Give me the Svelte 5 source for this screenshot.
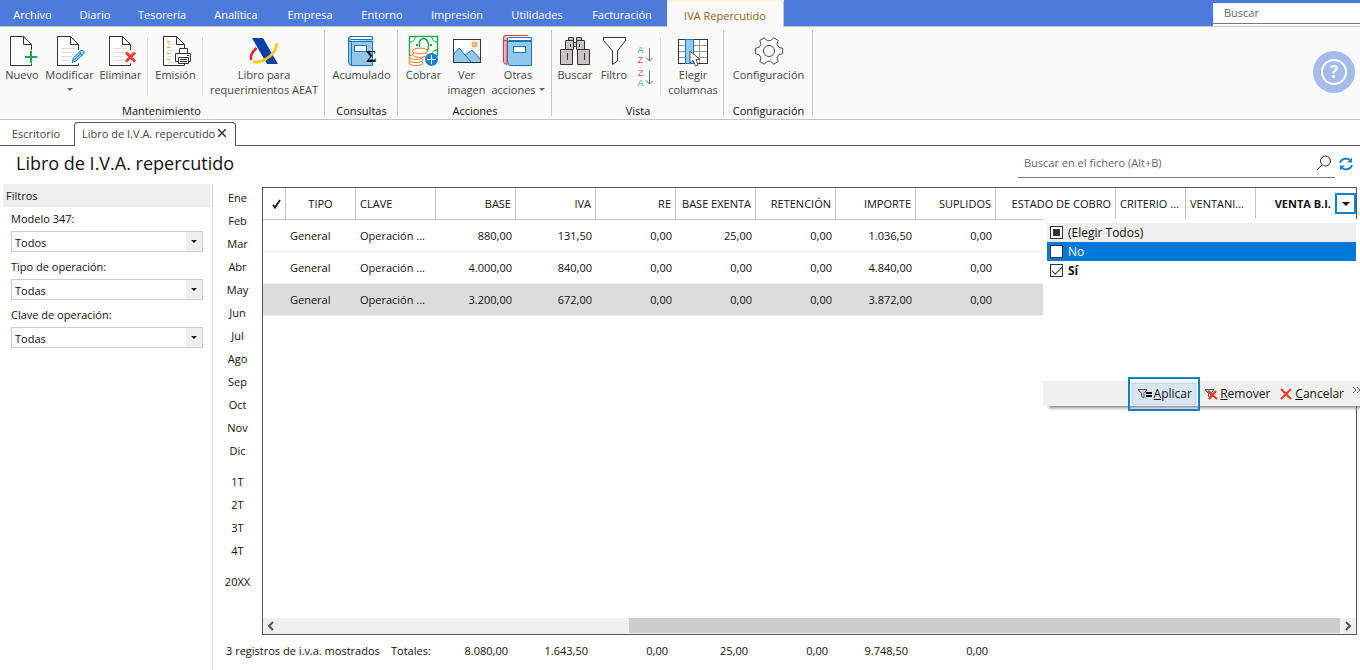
<script>
	const menu = [
		{ name: 'Archivo', size: 'w65' },
		{ name: 'Diario', size: 'w60' },
		{ name: 'Tesorería', size: 'w74' },
		{ name: 'Analítica', size: 'w74' },
		{ name: 'Empresa', size: 'w74' },
		{ name: 'Entorno', size: 'w70' },
		{ name: 'Impresión', size: 'w80' },
		{ name: 'Utilidades', size: 'w80' },
		{ name: 'Facturación', size: 'w90' }
	];

	const months = ['Ene', 'Feb', 'Mar', 'Abr', 'May', 'Jun', 'Jul', 'Ago', 'Sep', 'Oct', 'Nov', 'Dic'];
	const quarters = ['1T', '2T', '3T', '4T'];

	const filters = [
		{ id: 'modelo', label: 'Modelo 347:', value: 'Todos' },
		{ id: 'tipo', label: 'Tipo de operación:', value: 'Todas' },
		{ id: 'clave', label: 'Clave de operación:', value: 'Todas' }
	];

	const rows = [
		['880,00', '131,50', '0,00', '25,00', '0,00', '1.036,50', '0,00'],
		['4.000,00', '840,00', '0,00', '0,00', '0,00', '4.840,00', '0,00'],
		['3.200,00', '672,00', '0,00', '0,00', '0,00', '3.872,00', '0,00']
	];

	const totals = ['8.080,00', '1.643,50', '0,00', '25,00', '0,00', '9.748,50', '0,00'];

	let selected = $state(2);
	let no = $state(false);
	let si = $state(true);
	let all = $derived(no && si);
	let some = $derived(no !== si);

	function toggleAll() {
		const next = !all;
		no = next;
		si = next;
	}
</script>

{#snippet page()}
	<path d="M25.5 15V9.5L17.5 1.5H4.5V30.5H25.5V28.5M17.5 1.5V9.5H25.5" fill="#fff" stroke="#333" />
{/snippet}

{#snippet icon(name)}
	<svg class="icon" viewBox="0 0 32 32" fill="none" aria-hidden="true">
		{#if name === 'new'}
			{@render page()}
			<path d="M25 16V28M19 22H31" stroke="#12ac4b" stroke-width="2" />
		{:else if name === 'edit'}
			<g transform="translate(-1 0)">{@render page()}</g>
			<path d="M7 13.5H21M7 17.5H20M7 21.5H18M7 25.5H16" stroke="#ddd" />
			<path d="M18 27.5L19.5 22.5L27 15.5Q29 14.5 30 16.5Q30.5 18 29.5 19L22 26Z" fill="#9bcbee" stroke="#1b80c4" />
			<path d="M25.5 17L28.5 20.5M20.5 24.5L27 18.5" stroke="#1b80c4" />
		{:else if name === 'delete'}
			{@render page()}
			<path d="M8 13.5H22M8 17.5H20M8 21.5H19M8 25.5H18" stroke="#ddd" />
			<path d="M21 17.5L30 26.5M30 17.5L21 26.5" stroke="#ee3b3f" stroke-width="3" />
		{:else if name === 'print'}
			<g transform="translate(-1 0)">{@render page()}</g>
			<path d="M7 6.5H10M7 12.5H10M7 18.5H10M7 24.5H10" stroke="#f5921e" />
			<path d="M8 9.5H15M8 15.5H14M8 21.5H13M8 27.5H16" stroke="#ddd" />
			<path d="M19.5 18.5V13.5H27.5V18.5M18.5 26.5H15.5V18.5H30.5V26.5H28.5" fill="#fff" stroke="#333" />
			<path d="M18.5 22.5H28.5V28.5H18.5ZM20 24.5H27M20 26.5H27M27 20.5H29" fill="#fff" stroke="#333" />
		{:else if name === 'aeat'}
			<path d="M8.500 13Q1 20 3.500 25" stroke="#e3252b" stroke-width="2.500" />
			<path d="M4 3H15L30 29H19Z" fill="#0a3ea8" />
			<path d="M29 8.500Q28 18 18 24Q10 28.500 5 26.500" stroke="#fbc90a" stroke-width="2.600" />
		{:else if name === 'book-sum'}
			<path d="M26.500 6V30.500H5Q2.500 30 2.500 27V3Q2.500 1.500 5 1.500H26.500V4.500H5Q3 5 3 6.500Z" fill="#93c8ee" stroke="#1b75b8" />
			<path d="M5 2H26V4H5Q3.500 3.500 5 2Z" fill="#fff" />
			<path d="M5.500 7V30M3 6.500H27" stroke="#1b75b8" />
			<rect x="8.500" y="10.500" width="12" height="6" fill="#fff" stroke="#1b75b8" />
			<text x="20" y="27" class="sigma">Σ</text>
		{:else if name === 'money'}
			<rect x="1.500" y="1.500" width="28" height="19" fill="#fff" stroke="#12a44b" stroke-width="1.400" />
			<path d="M2 7Q7 7 7 2M24 2Q24 7 29 7M24 20Q24 15 29 15" stroke="#12a44b" />
			<path d="M11.500 12Q10.500 3.500 15.500 3.500Q21 4 20.500 12Q20 15 19 16" stroke="#12a44b" stroke-width="1.400" />
			<path d="M8 9h2v2h-2zM22 9h2v2h-2z" fill="#12a44b" />
			<g fill="#fff" stroke="#ec7b35">
				<ellipse cx="8" cy="28" rx="7" ry="2.500" />
				<ellipse cx="8" cy="25" rx="7" ry="2.500" />
				<ellipse cx="8" cy="22" rx="7" ry="2.500" />
				<ellipse cx="12" cy="19.500" rx="7.500" ry="2.800" />
				<ellipse cx="12" cy="16" rx="7.500" ry="2.800" />
			</g>
			<circle cx="23.500" cy="24.500" r="6.500" fill="#1883c6" />
			<path d="M23.500 20V29M19 24.500H28" stroke="#fff" />
		{:else if name === 'image'}
			<rect x="2.500" y="4.500" width="27" height="23" fill="#fff" stroke="#333" />
			<path d="M3 19L8 13L14 20L21 15L29 23V27H3Z" fill="#93c8ee" />
			<path d="M3 19L8 13L20 27M14 20L21 15L29 24" stroke="#1b75b8" />
			<circle cx="23.500" cy="9.500" r="2.500" fill="#fbc58d" stroke="#ec8435" />
		{:else if name === 'books'}
			<path d="M25.500 4V.5H3Q1.500.5 1.500 3V27Q2 29 5 29.500V5.500H2" fill="#fbb1ae" stroke="#e7333a" />
			<path d="M4 2.500H26V1H4Z" fill="#fff" />
			<path d="M29.500 6.500V30.500H8Q5.500 30 5.500 27V4Q5.500 2.500 7 2.500H29.500V5.500H7" fill="#93c8ee" stroke="#1b75b8" />
			<path d="M7 3H29V5H7Q6 4 7 3Z" fill="#fff" />
			<path d="M6 6.500H30" stroke="#1b75b8" />
			<rect x="11.500" y="11.500" width="12" height="6" fill="#fff" stroke="#1b75b8" />
		{:else if name === 'binoculars'}
			<g fill="#c6c4c4" stroke="#333">
				<path d="M9.500 2.500H14.500V5.500H9.500ZM17.500 2.500H22.500V5.500H17.500Z" />
				<path d="M6.500 5.500H14.500V14.500H6.500ZM17.500 5.500H25.500V14.500H17.500ZM14.500 7.500H17.500V11.500H14.500Z" />
				<path d="M1.500 14.500H13.500V29.500H1.500ZM18.500 14.500H30.500V29.500H18.500Z" />
				<path d="M8.500 18V25M25.500 18V25M11.500 9V12M20.500 9V12" />
			</g>
		{:else if name === 'funnel'}
			<path d="M5.500 2.500H27.500V5.500L19.500 16V26L14.500 29.500V16L5.500 5.500Z" fill="#fff" stroke="#333" />
		{:else if name === 'columns'}
			<rect x="1.500" y="4.500" width="29" height="24" fill="#fff" stroke="#333" />
			<path d="M2 10.500H30M2 16.500H30M2 22.500H30M22.500 5V28" stroke="#999" />
			<rect x="8.500" y="4.500" width="8" height="24" fill="#93c8ee" stroke="#1b75b8" />
			<path d="M13 16V28L16 25.500L18.500 31L21 30L19 24.500H23Z" fill="#fff" stroke="#555" />
		{:else if name === 'gear'}
			<path
				d="M25.900 12.400L29.700 13.300V18.700L25.900 19.600L24 22.700L25.200 26.600L20.600 29.200L17.800 26.300H14.200L11.400 29.200L6.800 26.600L8 22.700L6.100 19.600L2.300 18.700V13.300L6.100 12.400L8 9.300L6.800 5.400L11.400 2.800L14.200 5.700H17.800L20.600 2.800L25.200 5.400L24 9.300Z"
				fill="#fff"
				stroke="#444"
				stroke-linejoin="round"
			/>
			<circle cx="16" cy="16" r="5.500" stroke="#444" />
		{/if}
	</svg>
{/snippet}

{#snippet tool(name, lines, size, arrow)}
	<button class="tool {size}">
		{@render icon(name)}
		{#each lines as line, i}
			<span>
				{line}
				{#if arrow && i > 0}<i class="caret"></i>{/if}
			</span>
		{/each}
		{#if arrow && lines.length === 1}<span><i class="caret"></i></span>{/if}
	</button>
{/snippet}

{#snippet sort(first, second)}
	<button class="sort" aria-label="Ordenar {first}{second}">
		<span class="letters">
			<span class:blue={first === 'A'}>{first}</span>
			<span class:blue={second === 'A'}>{second}</span>
		</span>
		<svg width="8" height="16" viewBox="0 0 8 16" fill="none">
			<path d="M4.500 1V14M1 10.500L4.500 14L8 10.500" stroke="#666" />
		</svg>
	</button>
{/snippet}

<div class="app">
	<header class="menubar">
		<nav>
			{#each menu as item}
				<button class="menu {item.size}">{item.name}</button>
			{/each}
			<button class="menu current">IVA Repercutido</button>
		</nav>
		<input class="global" type="text" placeholder="Buscar" aria-label="Buscar" />
	</header>

	<section class="ribbon">
		<div class="group">
			<div class="tools">
				{@render tool('new', ['Nuevo'], 'w44')}
				{@render tool('edit', ['Modificar'], 'w51', true)}
				{@render tool('delete', ['Eliminar'], 'w51')}
				<div class="divider"></div>
				{@render tool('print', ['Emisión'], 'w51')}
				<div class="divider"></div>
				{@render tool('aeat', ['Libro para', 'requerimientos AEAT'], 'w118')}
			</div>
			<h2>Mantenimiento</h2>
		</div>
		<div class="group">
			<div class="tools">
				{@render tool('book-sum', ['Acumulado'], 'w71')}
			</div>
			<h2>Consultas</h2>
		</div>
		<div class="group">
			<div class="tools">
				{@render tool('money', ['Cobrar'], 'w49')}
				{@render tool('image', ['Ver', 'imagen'], 'w37')}
				{@render tool('books', ['Otras', 'acciones'], 'w66', true)}
			</div>
			<h2>Acciones</h2>
		</div>
		<div class="group">
			<div class="tools">
				{@render tool('binoculars', ['Buscar'], 'w44')}
				{@render tool('funnel', ['Filtro'], 'w34')}
				<div class="sorts">
					{@render sort('A', 'Z')}
					{@render sort('Z', 'A')}
				</div>
				<div class="divider"></div>
				{@render tool('columns', ['Elegir', 'columnas'], 'w60')}
			</div>
			<h2>Vista</h2>
		</div>
		<div class="group">
			<div class="tools">
				{@render tool('gear', ['Configuración'], 'w87')}
			</div>
			<h2>Configuración</h2>
		</div>
		<button class="help" aria-label="Ayuda">
			<svg width="42" height="42" viewBox="0 0 42 42">
				<circle cx="21" cy="21" r="21" fill="#a5bbec" />
				<circle cx="21" cy="21" r="12" fill="none" stroke="#fff" stroke-width="2" />
				<text x="21" y="27" class="question">?</text>
			</svg>
		</button>
	</section>

	<div class="tabs">
		<button class="tab">Escritorio</button>
		<button class="tab open">
			Libro de I.V.A. repercutido
			<svg width="8" height="8" viewBox="0 0 8 8"><path d="M0 0L8 8M8 0L0 8" stroke="#333" stroke-width="1.500" /></svg>
		</button>
		<div class="line"></div>
	</div>

	<div class="heading">
		<h1>Libro de I.V.A. repercutido</h1>
		<label class="search">
			<input type="text" placeholder="Buscar en el fichero (Alt+B)" aria-label="Buscar en el fichero" />
			<svg width="16" height="16" viewBox="0 0 16 16" fill="none" stroke="#222">
				<circle cx="9.500" cy="6" r="5" />
				<path d="M6 10L1 15" />
			</svg>
		</label>
		<button class="refresh" aria-label="Actualizar">
			<svg width="14" height="14" viewBox="0 0 14 14" fill="none" stroke="#1b83c7" stroke-width="2">
				<path d="M1 6Q2 2 7 1.500Q10 1.500 12 4M13 8Q12 12 7 12.500Q4 12.500 2 10" />
				<path d="M13 .5V5.500H8ZM1 13.500V8.500H6Z" fill="#1b83c7" stroke="none" />
			</svg>
		</button>
	</div>

	<main>
		<aside>
			<h3>Filtros</h3>
			{#each filters as filter}
				<div class="field">
					<label for={filter.id}>{filter.label}</label>
					<div class="select">
						<select id={filter.id}>
							<option>{filter.value}</option>
						</select>
						<i class="arrow"></i>
					</div>
				</div>
			{/each}
		</aside>

		<div class="periods">
			{#each months as month}
				<button>{month}</button>
			{/each}
			<div class="gap"></div>
			{#each quarters as quarter}
				<button>{quarter}</button>
			{/each}
			<div class="gap"></div>
			<button>20XX</button>
		</div>

		<div class="content">
			<div class="grid">
				<table>
					<colgroup>
						<col class="c-check" />
						<col class="c-70" />
						{#each Array(9) as _}
							<col class="c-80" />
						{/each}
						<col class="c-40" />
						<col class="c-70" />
						<col class="c-70" />
						<col />
					</colgroup>
					<thead>
						<tr>
							<th class="check">
								<svg width="9" height="10" viewBox="0 0 9 10" fill="none" aria-label="Marcado">
									<path d="M1 6L3 8.500L8 1" stroke="#222" stroke-width="2" />
								</svg>
							</th>
							<th class="center">TIPO</th>
							<th class="left">CLAVE</th>
							<th>BASE</th>
							<th>IVA</th>
							<th>RE</th>
							<th>BASE EXENTA</th>
							<th>RETENCIÓN</th>
							<th>IMPORTE</th>
							<th>SUPLIDOS</th>
							<th colspan="2">ESTADO DE COBRO</th>
							<th class="left">CRITERIO ...</th>
							<th class="left">VENTANI...</th>
							<th class="filtered">
								<div>
									VENTA B.I.
									<button class="drop" aria-label="Filtrar"><i class="arrow"></i></button>
								</div>
							</th>
						</tr>
					</thead>
					<tbody>
						{#each rows as row, i}
							<tr class:selected={selected === i} onclick={() => (selected = i)}>
								<td></td>
								<td class="left">General</td>
								<td class="left">Operación ...</td>
								{#each row as value}
									<td>{value}</td>
								{/each}
								<td colspan="5"></td>
							</tr>
						{/each}
					</tbody>
				</table>

				<div class="scrollbar">
					<svg width="16" height="16" viewBox="0 0 16 16" fill="none"><path d="M10 4L6 8L10 12" stroke="#555" stroke-width="2" /></svg>
					<div class="track"><div class="thumb"></div></div>
					<svg width="16" height="16" viewBox="0 0 16 16" fill="none"><path d="M6 4L10 8L6 12" stroke="#555" stroke-width="2" /></svg>
				</div>

				<div class="popup">
					<div class="options">
						<label class="all">
							<input type="checkbox" checked={all} indeterminate={some} onchange={toggleAll} />
							(Elegir Todos)
						</label>
						<label class="hover"><input type="checkbox" bind:checked={no} />No</label>
						<label class="strong"><input type="checkbox" bind:checked={si} />Sí</label>
					</div>
					<div class="actions">
						<div class="mark">
							<button class="apply">
								<svg width="15" height="11" viewBox="0 0 15 11">
									<path d="M1 1.500H10L7 5.500V10L4.500 8.500V5.500Z" fill="#ccc" stroke="#555" />
									<path d="M9 5H15M9 8H15" stroke="#111" stroke-width="2" />
								</svg>
								<span><u>A</u>plicar</span>
							</button>
						</div>
						<button class="remove">
							<svg width="14" height="12" viewBox="0 0 14 12" fill="none">
								<path d="M1 1.500H10L7 5.500V10L4.500 8.500V5.500Z" fill="#ccc" stroke="#555" />
								<path d="M4 3L13 11M12 3L5 11" stroke="#ec3b22" stroke-width="2" />
							</svg>
							<span><u>R</u>emover</span>
						</button>
						<button class="cancel">
							<svg width="12" height="12" viewBox="0 0 12 12"><path d="M1 1L11 11M11 1L1 11" stroke="#ec3b22" stroke-width="2" /></svg>
							<span><u>C</u>ancelar</span>
						</button>
						<button class="more" aria-label="Más">
							<svg width="7" height="6" viewBox="0 0 7 6" fill="none"><path d="M0 0L3 3L0 6M4 0L7 3L4 6" stroke="#55559a" /></svg>
						</button>
					</div>
				</div>
			</div>

			<footer>
				<span class="count">3 registros de i.v.a. mostrados</span>
				<span class="label">Totales:</span>
				{#each totals as total}
					<span class="total">{total}</span>
				{/each}
			</footer>
		</div>
	</main>
</div>

<style>
	:global(body) {
		background: white;
		overflow: hidden;
	}

	.app {
		display: flex;
		flex-direction: column;
		min-height: 100vh;
		font-family: 'Open Sans', 'Noto Sans', sans-serif;
		font-size: 11px;
		line-height: 15px;
		color: #111;
	}

	.app * {
		box-sizing: border-box;
	}

	button,
	input,
	select {
		font: inherit;
		color: inherit;
		background: none;
		border: none;
		border-radius: 0;
		padding: 0;
		margin: 0;
		outline: none;
	}

	h1,
	h2,
	h3 {
		margin: 0;
		font-weight: normal;
	}

	svg {
		flex: none;
	}

	/* ---------- MENU ---------- */

	.menubar {
		display: flex;
		justify-content: space-between;
		height: 27px;
		background: #4d7bdc;
		border-bottom: 1px solid #c8c8c8;
	}

	.menubar nav {
		display: flex;
	}

	.menu {
		height: 26px;
		padding-top: 3px;
		color: white;
		white-space: nowrap;
	}

	.menu.current {
		width: 117px;
		height: 27px;
		padding-top: 1px;
		background: #fafafa;
		color: #8a6414;
		border: 1px solid #c8c8c8;
		border-width: 0 1px 0 0;
		border-top: 2px solid #fdf6dc;
	}

	.global {
		width: 147px;
		height: 21px;
		margin-top: 3px;
		padding: 0 11px 2px;
		background: white;
		border-bottom: 1px solid #777;
		box-shadow: 0 2px 0 white;
	}

	input::placeholder {
		color: #666;
		opacity: 1;
	}

	.w34 { width: 34px; }
	.w37 { width: 37px; }
	.w44 { width: 44px; }
	.w49 { width: 49px; }
	.w51 { width: 51px; }
	.w60 { width: 60px; }
	.w65 { width: 65px; }
	.w66 { width: 66px; }
	.w70 { width: 70px; }
	.w71 { width: 71px; }
	.w74 { width: 74px; }
	.w80 { width: 80px; }
	.w87 { width: 87px; }
	.w90 { width: 90px; }
	.w118 { width: 118px; }

	/* ---------- RIBBON ---------- */

	.ribbon {
		display: flex;
		height: 93px;
		padding-top: 3px;
		background: #fafafa;
		border-bottom: 1px solid #c6c6c6;
	}

	.group {
		display: flex;
		flex-direction: column;
		height: 86px;
		padding-left: 1px;
		border-right: 1px solid #c6c6c6;
	}

	.group:first-child {
		padding: 0 1px 0 0;
	}

	.group h2 {
		margin-top: auto;
		font-size: 11px;
		line-height: 10px;
		text-align: center;
	}

	.tools {
		display: flex;
		padding-top: 5px;
	}

	.tool {
		display: flex;
		flex-direction: column;
		align-items: center;
		color: #444;
		white-space: nowrap;
	}

	.tool span {
		display: flex;
		align-items: center;
		gap: 3px;
		height: 15px;
	}

	.icon {
		width: 32px;
		height: 32px;
	}

	.sigma {
		font-size: 16px;
		font-weight: bold;
		font-family: 'Liberation Serif', serif;
		fill: #111;
	}

	.caret {
		border: 3px solid transparent;
		border-top-color: #666;
		border-bottom: none;
	}

	.divider {
		width: 1px;
		height: 59px;
		margin: 2px 2px 0 1px;
		background: #ddd;
	}

	.sorts {
		display: flex;
		flex-direction: column;
		align-items: center;
		gap: 3px;
		width: 28px;
		padding-top: 10px;
	}

	.sort {
		display: flex;
		align-items: center;
		gap: 1px;
		height: 20px;
	}

	.letters {
		display: flex;
		flex-direction: column;
		font-family: 'Liberation Sans', sans-serif;
		font-size: 9px;
		line-height: 10px;
		color: #ee5a5e;
	}

	.letters .blue {
		color: #3a97d3;
	}

	.help {
		height: 42px;
		margin: 21px 5px 0 auto;
	}

	.question {
		font-size: 17px;
		font-weight: bold;
		text-anchor: middle;
		fill: white;
	}

	/* ---------- TABS ---------- */

	.tabs {
		display: flex;
		align-items: flex-end;
		height: 26px;
	}

	.tab {
		width: 74px;
		height: 24px;
		padding: 0 2px 1px 0;
		border-bottom: 1px solid #555;
		color: #444;
	}

	.tab.open {
		display: flex;
		align-items: center;
		justify-content: space-between;
		width: 162px;
		padding: 0 9px 3px 7px;
		border: 1px solid #555;
		border-bottom: none;
		border-radius: 4px 4px 0 0;
		white-space: nowrap;
	}

	.tabs .line {
		flex: 1;
		border-bottom: 1px solid #555;
	}

	/* ---------- HEADING ---------- */

	.heading {
		display: flex;
		height: 38px;
		padding: 3px 7px 0 16px;
	}

	h1 {
		flex: 1;
		font-size: 18px;
		line-height: 29px;
	}

	.search {
		display: flex;
		align-items: center;
		width: 317px;
		height: 29px;
		padding: 0 3px 0 6px;
		border-bottom: 1px solid #777;
	}

	.search input {
		flex: 1;
		padding-bottom: 2px;
	}

	.refresh {
		display: flex;
		align-items: center;
		height: 30px;
		margin-left: 4px;
	}

	/* ---------- FILTERS ---------- */

	main {
		display: flex;
		flex: 1;
	}

	aside {
		width: 213px;
		border-right: 1px solid #d8d8d8;
	}

	aside h3 {
		height: 23px;
		margin: 0 1px 3px 3px;
		padding-left: 3px;
		font-size: 11px;
		line-height: 23px;
		background: #eee;
	}

	.field {
		height: 48px;
		padding: 1px 9px 0 11px;
	}

	.field label {
		display: block;
		height: 20px;
		line-height: 16px;
	}

	.select {
		display: flex;
		align-items: center;
		height: 21px;
		border: 1px solid #ccc;
		background: linear-gradient(to left, #eee 16px, white 16px);
	}

	.select select {
		flex: 1;
		height: 19px;
		padding: 1px 0 0 3px;
		appearance: none;
	}

	.arrow {
		width: 0;
		border: 3px solid transparent;
		border-top-color: #111;
		border-bottom: none;
	}

	.select .arrow {
		margin-right: 5px;
	}

	/* ---------- PERIODS ---------- */

	.periods {
		display: flex;
		flex-direction: column;
		width: 49px;
		padding-top: 2px;
	}

	.periods button {
		height: 23px;
	}

	.periods .gap {
		height: 8px;
	}

	/* ---------- GRID ---------- */

	.content {
		display: flex;
		flex-direction: column;
		flex: 1;
		min-width: 0;
		padding: 3px 3px 0 0;
	}

	.grid {
		display: flex;
		flex-direction: column;
		position: relative;
		flex: 1;
		border: 1px solid #555;
	}

	table {
		width: 100%;
		table-layout: fixed;
		border-collapse: separate;
		border-spacing: 0;
	}

	.c-check { width: 23px; }
	.c-40 { width: 40px; }
	.c-70 { width: 70px; }
	.c-80 { width: 80px; }

	th,
	td {
		height: 32px;
		padding: 0 4px;
		text-align: right;
		font-weight: normal;
		white-space: nowrap;
		overflow: hidden;
	}

	th {
		border-right: 1px solid #c4c4c4;
		border-bottom: 1px solid #c4c4c4;
	}

	td {
		border-bottom: 1px solid #eee;
	}

	th.center {
		text-align: center;
	}

	th.left,
	td.left {
		text-align: left;
	}

	th.check svg {
		display: block;
		margin-left: auto;
	}

	th.filtered {
		padding: 0;
		border-right: none;
		font-weight: bold;
	}

	th.filtered div {
		display: flex;
		align-items: center;
		justify-content: flex-end;
		gap: 4px;
	}

	.drop {
		display: flex;
		align-items: center;
		justify-content: center;
		width: 21px;
		height: 21px;
		border: 2px solid #0a84c6;
	}

	.drop .arrow {
		border-width: 4px 4px 0;
	}

	tr.selected {
		background: #dcdcdc;
	}

	.scrollbar {
		display: flex;
		height: 16px;
		margin-top: auto;
		background: #f0f0f0;
	}

	.track {
		flex: 1;
	}

	.thumb {
		width: 67%;
		height: 15px;
		margin-left: auto;
		background: #cdcdcd;
	}

	/* ---------- POPUP ---------- */

	.popup {
		position: absolute;
		top: 31px;
		right: -4px;
		width: 317px;
		background: white;
	}

	.options {
		height: 162px;
		padding: 4px 4px 0;
	}

	.options label {
		display: flex;
		align-items: center;
		gap: 5px;
		height: 19px;
		padding-left: 3px;
		font-size: 12px;
	}

	.options .all {
		background: #eee;
	}

	.options .hover {
		background: #0078d7;
		color: white;
	}

	.options .strong {
		font-weight: bold;
	}

	.options input {
		display: grid;
		place-items: center;
		width: 13px;
		height: 13px;
		appearance: none;
		background: white;
		border: 1px solid #333;
	}

	.options input:indeterminate::before {
		content: '';
		width: 7px;
		height: 7px;
		background: #333;
	}

	.options input:checked::before {
		content: '';
		width: 9px;
		height: 4px;
		border: 1px solid #333;
		border-width: 0 0 1px 1px;
		transform: translateY(-1px) rotate(-45deg);
	}

	.actions {
		display: flex;
		align-items: center;
		justify-content: flex-end;
		height: 25px;
		background: #f0f0f0;
		box-shadow: 5px 3px 3px -1px #888;
		font-size: 12px;
	}

	.actions button {
		display: flex;
		align-items: center;
		gap: 2px;
		height: 22px;
	}

	.mark {
		padding: 4px 2px;
		margin-right: 4px;
		border: 2px solid #0a84c6;
	}

	.actions .apply {
		width: 64px;
		justify-content: center;
		background: #d8e6f2;
		border: 1px solid #bcdcf4;
	}

	.actions .cancel {
		margin-left: 10px;
		gap: 3px;
	}

	.actions .more {
		align-items: flex-start;
		padding-top: 4px;
		margin-left: 9px;
	}

	/* ---------- TOTALS ---------- */

	footer {
		display: flex;
		align-items: center;
		height: 35px;
		padding-bottom: 4px;
		margin-left: -36px;
		white-space: nowrap;
	}

	.count {
		width: 165px;
	}

	.label {
		width: 37px;
	}

	.total {
		width: 80px;
		text-align: right;
	}
</style>
